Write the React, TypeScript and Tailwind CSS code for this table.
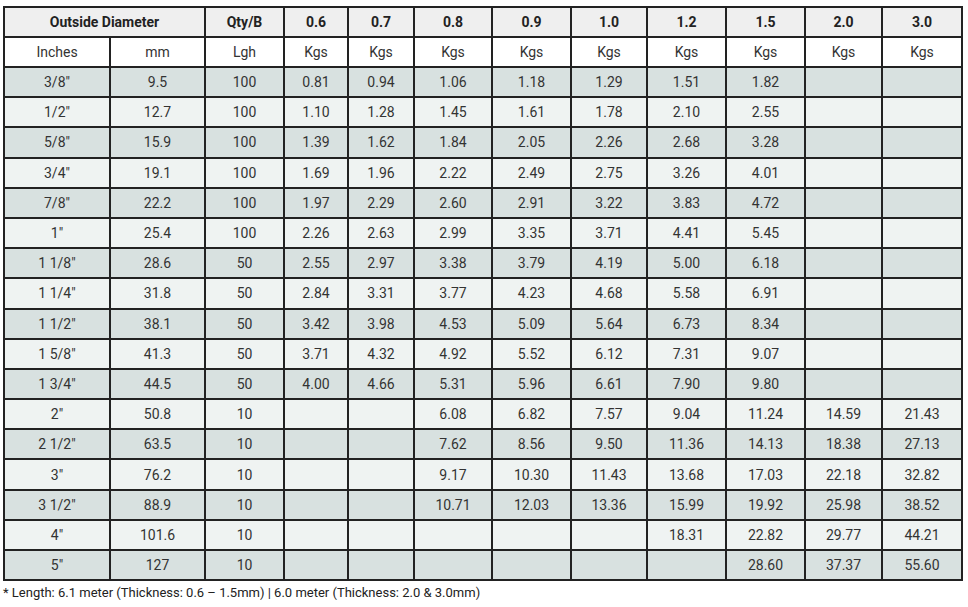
const WIDTHS = [106, 95, 79, 64, 66, 78, 79, 76, 79, 79, 77, 80];

const THICK = ['0.6', '0.7', '0.8', '0.9', '1.0', '1.2', '1.5', '2.0', '3.0'];

const ROWS: string[][] = [
  ['3/8″', '9.5', '100', '0.81', '0.94', '1.06', '1.18', '1.29', '1.51', '1.82', '', ''],
  ['1/2″', '12.7', '100', '1.10', '1.28', '1.45', '1.61', '1.78', '2.10', '2.55', '', ''],
  ['5/8″', '15.9', '100', '1.39', '1.62', '1.84', '2.05', '2.26', '2.68', '3.28', '', ''],
  ['3/4″', '19.1', '100', '1.69', '1.96', '2.22', '2.49', '2.75', '3.26', '4.01', '', ''],
  ['7/8″', '22.2', '100', '1.97', '2.29', '2.60', '2.91', '3.22', '3.83', '4.72', '', ''],
  ['1"', '25.4', '100', '2.26', '2.63', '2.99', '3.35', '3.71', '4.41', '5.45', '', ''],
  ['1 1/8″', '28.6', '50', '2.55', '2.97', '3.38', '3.79', '4.19', '5.00', '6.18', '', ''],
  ['1 1/4″', '31.8', '50', '2.84', '3.31', '3.77', '4.23', '4.68', '5.58', '6.91', '', ''],
  ['1 1/2″', '38.1', '50', '3.42', '3.98', '4.53', '5.09', '5.64', '6.73', '8.34', '', ''],
  ['1 5/8″', '41.3', '50', '3.71', '4.32', '4.92', '5.52', '6.12', '7.31', '9.07', '', ''],
  ['1 3/4″', '44.5', '50', '4.00', '4.66', '5.31', '5.96', '6.61', '7.90', '9.80', '', ''],
  ['2"', '50.8', '10', '', '', '6.08', '6.82', '7.57', '9.04', '11.24', '14.59', '21.43'],
  ['2 1/2″', '63.5', '10', '', '', '7.62', '8.56', '9.50', '11.36', '14.13', '18.38', '27.13'],
  ['3"', '76.2', '10', '', '', '9.17', '10.30', '11.43', '13.68', '17.03', '22.18', '32.82'],
  ['3 1/2″', '88.9', '10', '', '', '10.71', '12.03', '13.36', '15.99', '19.92', '25.98', '38.52'],
  ['4"', '101.6', '10', '', '', '', '', '', '18.31', '22.82', '29.77', '44.21'],
  ['5"', '127', '10', '', '', '', '', '', '', '28.60', '37.37', '55.60'],
];

const head = 'border-2 border-[#222] h-[30px] p-0 text-center align-middle';
const cell = 'border-2 border-[#222] h-[30.2px] p-0 text-center align-middle';

export default function App() {
  return (
    <div className="bg-white w-[968px] h-[607px] pl-[3px] pt-[6px] text-[#333] font-['Roboto','Liberation_Sans',sans-serif]">
      <table className="table-fixed border-collapse w-[960px] text-[14px] leading-none">
        <colgroup>
          {WIDTHS.map((w, i) => (
            <col key={i} style={{ width: w }} />
          ))}
        </colgroup>
        <thead>
          <tr className="bg-[#efefef] font-bold text-[#222]">
            <th colSpan={2} className={head}>Outside Diameter</th>
            <th className={head}>Qty/B</th>
            {THICK.map((t) => (
              <th key={t} className={head}>{t}</th>
            ))}
          </tr>
          <tr className="bg-white">
            <td className={head}>Inches</td>
            <td className={head}>mm</td>
            <td className={head}>Lgh</td>
            {THICK.map((t) => (
              <td key={t} className={head}>Kgs</td>
            ))}
          </tr>
        </thead>
        <tbody>
          {ROWS.map((row, r) => (
            <tr key={r} className={r % 2 === 0 ? 'bg-[#d8e1e0]' : 'bg-[#eff3f2]'}>
              {row.map((v, c) => (
                <td key={c} className={cell}>{v}</td>
              ))}
            </tr>
          ))}
        </tbody>
      </table>
      <p className="text-[13px] leading-none mt-[5px] text-[#222]">
        * Length: 6.1 meter (Thickness: 0.6 – 1.5mm) | 6.0 meter (Thickness: 2.0 &amp; 3.0mm)
      </p>
    </div>
  );
}
